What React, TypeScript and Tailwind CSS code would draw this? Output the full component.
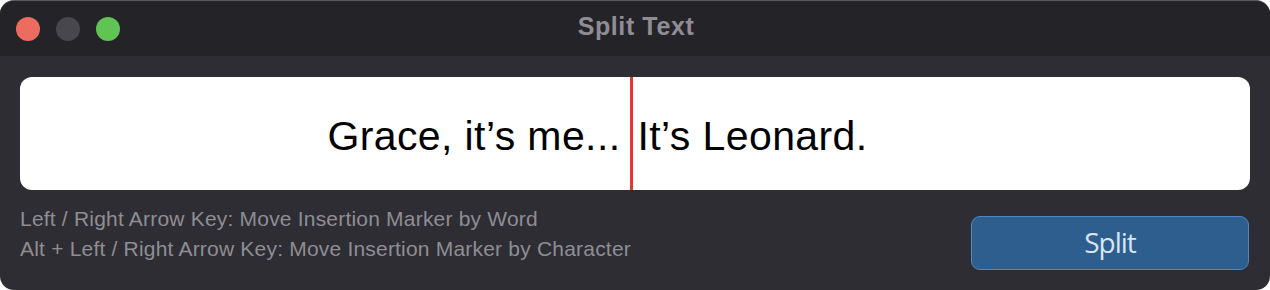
import React from 'react';

function TrafficLights() {
  return (
    <div className="flex items-center gap-4 pl-4">
      <span className="h-6 w-6 rounded-full bg-[#ee6b5f]" />
      <span className="h-6 w-6 rounded-full bg-[#48474d]" />
      <span className="h-6 w-6 rounded-full bg-[#5fc454]" />
    </div>
  );
}

export default function App() {
  return (
    <div className="h-[290px] w-[1270px] bg-white">
      <div className="flex h-full w-full flex-col overflow-hidden rounded-[14px] border-t border-[#5c5b60] bg-[#2e2d33] font-[family-name:'Liberation_Sans',Arial,sans-serif]">
        {/* title bar */}
        <div className="relative flex h-[55px] shrink-0 items-center bg-[#242328]">
          <TrafficLights />
          <div className="absolute inset-0 flex items-center justify-center pb-[3px] pl-[2px] text-[25px] font-bold tracking-[0.6px] text-[#8e8d93]">
            Split Text
          </div>
        </div>

        {/* body */}
        <div className="flex flex-1 flex-col px-5 pt-[21px]">
          <div className="flex h-[113px] items-stretch justify-center rounded-[12px] bg-white pr-[75px] text-[41px] tracking-[0.4px] text-black">
            <span className="flex items-center pt-[6px]">Grace, it’s me...</span>
            <span className="ml-[9px] mr-[5px] w-[3px] bg-[#e0382b]" />
            <span className="flex items-center pt-[6px]">It’s Leonard.</span>
          </div>

          <div className="flex items-start justify-between pt-[16px]">
            <div className="flex flex-col gap-[7px] pt-[1px] text-[21px] leading-[23px] tracking-[0.2px] text-[#8e8d93]">
              <span>Left / Right Arrow Key: Move Insertion Marker by Word</span>
              <span>Alt + Left / Right Arrow Key: Move Insertion Marker by Character</span>
            </div>
            <button className="mr-[1px] mt-[10px] flex h-[54px] w-[278px] items-center justify-center rounded-[9px] border border-[#4d88c4] bg-[#2d5e8d] pb-[2px] font-[family-name:'Open_Sans',sans-serif] text-[28px] tracking-[-1px] text-[#d9e4ef]">
              Split
            </button>
          </div>
        </div>
      </div>
    </div>
  );
}
